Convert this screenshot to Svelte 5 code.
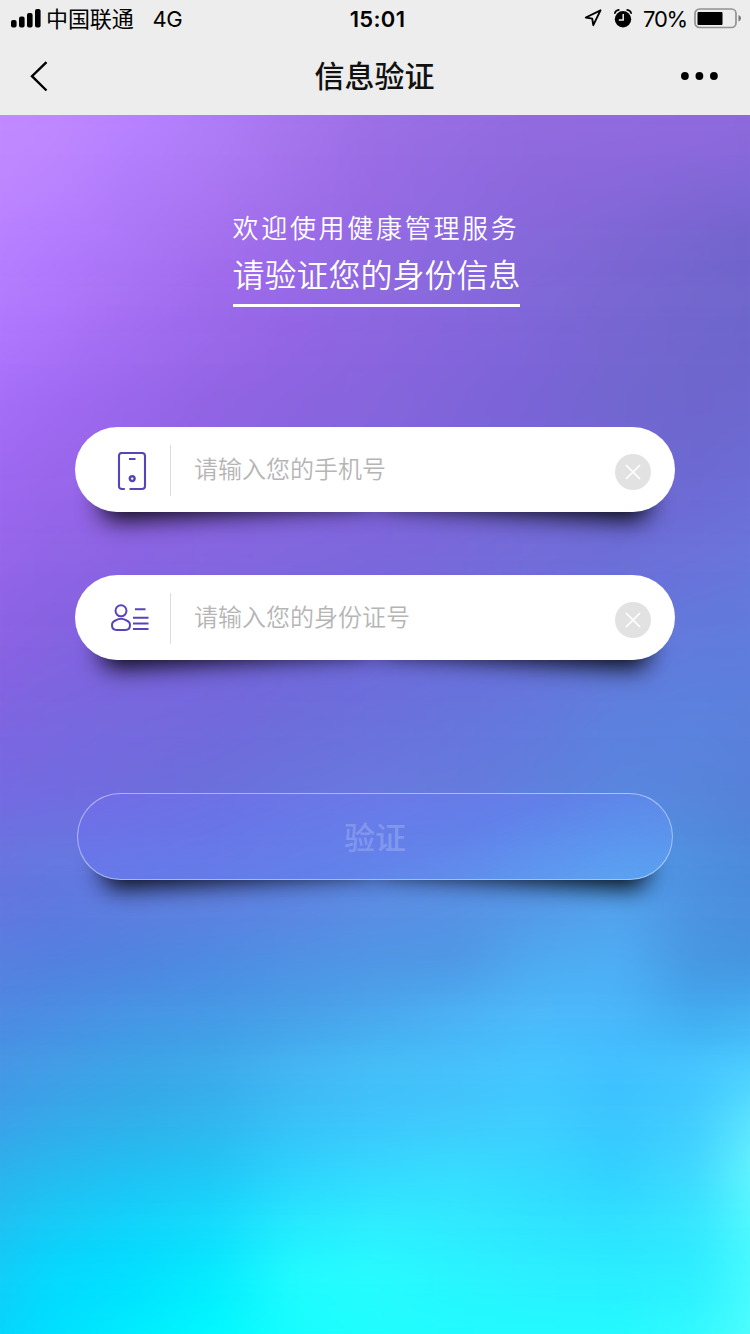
<script>
  const stops = [
    [115, 'c48bff,c088ff,bb84ff,af7bf8,a777f0,a072e8,986ee4,946ce0,926be0,906adf,9069dc'],
    [165, 'c189ff,be87ff,b580ff,ae7cf6,a474ec,9a6de4,956ce2,9069de,8f69de,8d69dd,8a68da'],
    [215, 'c088ff,b982ff,af7bfa,aa76f2,a070ea,986be5,906ae0,8b68dc,8768da,8167d6,7c67d8'],
    [265, 'b981ff,b27bff,ab76f7,a470ee,9b6be8,926ae2,8b69de,8568d9,7d66d5,7665cf,6e62c9'],
    [315, 'b47cff,ae77fc,a770f3,9d69ec,9568e7,8e68e0,8768dd,7f67d8,7966d2,7266ce,6e66cc'],
    [365, 'b077ff,a871f8,a06bf0,9968e9,9164e3,8a65df,8464dc,7d65d8,7566d1,6f66cd,6c65cb'],
    [415, 'a870f8,a06af2,9967eb,9164e4,8b64e0,8665dd,7f64da,7964d6,7266d0,6e66cd,6d68d0'],
    [500, '9e68f2,9866ea,9264e6,8c63e2,8764e0,8265dd,7c65da,7767d8,7269d6,6d6ad4,6c6fd8'],
    [560, '9866ec,9064e6,8a63e2,8565e0,8066de,7c66dc,7768da,716bd8,6c6cd7,6b71da,6876da'],
    [640, '8e62e5,8562e0,7e64df,7a66de,7568dc,716adc,6e6edc,6b71dc,6777dc,617bdc,5f7cdc'],
    [720, '8063e1,7967df,7668de,7268dc,6d6cdb,6a70dc,6674dc,6279dd,5c80dd,5a82de,5a7fdb'],
    [790, '756ae2,736be1,6f6dde,6b70dc,6a76de,6a7adf,667bde,6080de,5a86df,5885dc,5680d8'],
    [850, '6a72e0,6677e0,6478e0,6279df,607fe0,6084e1,5c87e1,5690e4,4f97e6,4f8edf,4a87d9'],
    [900, '6375e0,5d78e0,5d7ee0,5d81e0,5c85e2,5a8de3,5791e4,5598e8,54a2ee,4c93e2,4a8cdb'],
    [950, '5980e0,5480e0,5084e0,4e8be2,5092e4,5096e6,4f97e6,4eaaf0,4eaef5,4897e2,4494e0'],
    [1000, '4f86e2,4a8ce3,4794e4,4598e5,479ee8,4aa6ec,4bb0f4,4cb8fb,4ab6fa,40a9ee,44b0f4'],
    [1050, '4693e4,429ce6,3ba3e7,3ca9ea,44b4f2,44bdf7,45bffa,44c5ff,40c0ff,44c4ff,4ccfff'],
    [1100, '3f9ce8,36a8e9,32aeea,33b4ee,3abff7,3fc4fc,40c8fc,40ccff,3bc4ff,42ccff,64ebff'],
    [1150, '30aeeb,27b9f0,22c0f3,22c6f6,2ed2fe,35d8ff,38dcff,36d8ff,32d0ff,42d8ff,70ffff'],
    [1200, '22bcf0,17caf6,10d3fb,15dafd,25e8ff,2eecff,30e9ff,2fe3ff,2fdfff,35e6ff,5affff'],
    [1250, '16c8f5,02d8ff,00deff,04eaff,20fbff,26fbff,28f4ff,2aefff,28edff,2ceeff,4effff'],
    [1334, '00d4ff,00e4ff,00f4ff,00ffff,14ffff,1effff,1effff,20ffff,22ffff,34ffff,5effff']
  ];
  const row = (colors) => `linear-gradient(90deg, ${colors.split(',').map((c) => '#' + c).join(', ')})`;
  const bands = stops.slice(0, -1).map(([y, colors], i) => ({
    height: stops[i + 1][0] - y,
    top: row(colors),
    bottom: row(stops[i + 1][1])
  }));

  const fields = $state([
    { kind: 'phone', hint: '请输入您的手机号', value: '' },
    { kind: 'card', hint: '请输入您的身份证号', value: '' }
  ]);
</script>

<div class="screen">
  <header>
    <div class="status">
      <div class="carrier">
        <svg width="30" height="19" viewBox="0 0 30 19">
          <rect x="0" y="11" width="5.6" height="7.5" rx="2" />
          <rect x="8" y="7.5" width="5.6" height="11" rx="2" />
          <rect x="16" y="4" width="5.6" height="14.5" rx="2" />
          <rect x="24" y="0" width="5.6" height="18.5" rx="2" />
        </svg>
        <span>中国联通</span><span class="net">4G</span>
      </div>
      <strong>15:01</strong>
      <div class="power">
        <svg width="18" height="18" viewBox="0 0 18 18">
          <path d="M16.5 1.3 1.8 8.5 8.2 9.6 9.3 16.2Z" fill="none" stroke="#000" stroke-width="1.9" stroke-linejoin="round" />
        </svg>
        <svg class="alarm" width="18" height="19" viewBox="0 0 18 19">
          <circle cx="9" cy="10.2" r="8.2" />
          <path d="M.9 4.1Q1.7 1.3 4.8.9M17.1 4.1Q16.3 1.3 13.2.9" fill="none" stroke="#000" stroke-width="1.7" stroke-linecap="round" />
          <path d="M9.2 5V11H4.8" fill="none" stroke="#eee" stroke-width="1.5" />
        </svg>
        <span>70%</span>
        <svg class="battery" width="48" height="21" viewBox="0 0 48 21">
          <rect x="1" y="1" width="41" height="18.5" rx="4.5" fill="none" stroke="#929292" stroke-width="1.7" />
          <rect x="3.5" y="4" width="25" height="13" rx="1" />
          <path d="M44.5 7Q47 8 47 10.3T44.5 13.6Z" fill="#777" />
        </svg>
      </div>
    </div>
    <nav>
      <svg width="20" height="32" viewBox="0 0 20 32">
        <path d="M17.5 2.2 3 16.2 17.5 30.5" fill="none" stroke="#000" stroke-width="2.4" />
      </svg>
      <h1>信息验证</h1>
      <svg width="38" height="8" viewBox="0 0 38 8">
        <circle cx="4.9" cy="4" r="3.9" /><circle cx="19.4" cy="4" r="3.9" /><circle cx="33.9" cy="4" r="3.9" />
      </svg>
    </nav>
  </header>

  <main>
    <div class="backdrop">
      {#each bands as band}
        <div class="band" style:height="{band.height}px" style:background={band.bottom}>
          <div class="fade" style:background={band.top}></div>
        </div>
      {/each}
    </div>

    <section class="intro">
      <p>欢迎使用健康管理服务</p>
      <h2>请验证您的身份信息</h2>
    </section>

    <form>
      {#each fields as field}
        <div class="lifted">
          <div class="shade"></div>
          <label class="pill">
            <span class="icon">
              {#if field.kind === 'phone'}
                <svg class="phone" width="30" height="40" viewBox="0 0 30 40" fill="none" stroke="#5744bd" stroke-width="2.1">
                  <path d="M7.8 37H5Q2 37 2 34V4Q2 1 5 1H25Q28 1 28 4V34Q28 37 25 37H12.5M12 7H18.5" />
                  <circle cx="15.2" cy="26.6" r="2.4" stroke-width="2.4" />
                </svg>
              {:else}
                <svg width="40" height="30" viewBox="0 0 40 30" fill="none" stroke="#5744bd" stroke-width="2">
                  <circle cx="11" cy="7.8" r="5.5" />
                  <path d="M6 17.2Q11 14.4 16 17.2Q20 18.5 20 22Q20 26.9 15.4 26.9H6.6Q2 26.9 2 22Q2 18.5 6 17.2ZM25 6.2H35.5M23 14.8H38.5M23 20.4H38.5M23 26H38.5" />
                </svg>
              {/if}
            </span>
            <input placeholder={field.hint} bind:value={field.value} />
            <button class="clear" type="button" aria-label="清除" onclick={() => (field.value = '')}>
              <svg width="36" height="36" viewBox="0 0 36 36">
                <circle cx="18" cy="18" r="18" fill="#e2e2e2" />
                <path d="M11 11 25 25M25 11 11 25" stroke="#fff" stroke-width="1.7" />
              </svg>
            </button>
          </label>
        </div>
      {/each}
      <div class="lifted action">
        <div class="shade"></div>
        <button class="submit" type="button">验证</button>
      </div>
    </form>
  </main>
</div>

<style>
  :global(body) { margin: 0; }
  .screen {
    width: 750px;
    height: 1334px;
    overflow: hidden;
    display: flex;
    flex-direction: column;
    font-family: "Noto Sans CJK SC", sans-serif;
  }
  svg { display: block; flex: none; }
  header { height: 115px; background: #ededed; color: #000; }
  .status {
    height: 38px;
    display: grid;
    grid-template-columns: 1fr auto 1fr;
    align-items: center;
    padding: 0 9px 0 11px;
    font: 22px/38px Inter, "Noto Sans CJK SC", sans-serif;
  }
  .carrier, .power { display: flex; align-items: center; }
  .carrier svg { margin-top: -2px; }
  .carrier span { margin-left: 5px; letter-spacing: -.1px; }
  .carrier .net { margin-left: 19px; letter-spacing: -.5px; }
  .status strong { font-weight: 600; letter-spacing: .3px; padding-left: 3px; }
  .power { justify-content: flex-end; }
  .power svg { margin-top: -2px; }
  .power .alarm { margin-left: 12px; }
  .power span { margin-left: 11px; letter-spacing: -1.2px; }
  .power .battery { margin-left: 7px; margin-right: -1px; }
  nav {
    height: 77px;
    box-sizing: border-box;
    display: flex;
    align-items: center;
    justify-content: space-between;
    padding: 0 32px 1px 29px;
  }
  h1 { margin: -4px 0 0 20px; font-size: 30px; line-height: 44px; font-weight: 500; color: #111; }
  main { position: relative; flex: 1; overflow: hidden; }
  .backdrop {
    position: absolute;
    inset: 0;
    filter: blur(11px);
    transform: scale(1.07, 1.045);
  }
  .fade {
    height: 100%;
    mask-image: linear-gradient(#000, transparent);
    -webkit-mask-image: linear-gradient(#000, transparent);
  }
  .intro {
    position: relative;
    width: 287px;
    margin: 0 auto;
    padding-top: 93px;
    left: 1px;
    color: #fff;
    white-space: nowrap;
    border-bottom: 3px solid #fff;
  }
  .intro p { margin: 0; font-size: 26px; line-height: 38px; font-weight: 350; letter-spacing: 2.7px; }
  .intro h2 { margin: 4px 0 0; font-size: 32px; line-height: 46px; font-weight: 350; height: 54px; }
  form {
    position: relative;
    display: flex;
    flex-direction: column;
    align-items: center;
    gap: 63px;
    padding-top: 120px;
  }
  .lifted { position: relative; width: 600px; height: 85px; }
  .shade {
    position: absolute;
    inset: 0;
    clip-path: path(evenodd, "M-60 -60H660V160H-60ZM42.5 0H557.5A42.5 42.5 0 0 1 557.5 85H42.5A42.5 42.5 0 0 1 42.5 0Z");
  }
  .shade::before, .shade::after {
    content: "";
    position: absolute;
    bottom: 14px;
    left: 24px;
    width: 270px;
    height: 40px;
    border-radius: 24px 0 0 18px;
    box-shadow: 0 15px 24px rgba(0, 0, 0, .95);
    transform: rotate(-3.4deg);
  }
  .shade::after {
    left: auto;
    right: 24px;
    border-radius: 0 24px 18px 0;
    transform: rotate(3.4deg);
  }
  .pill {
    position: relative;
    display: flex;
    align-items: center;
    box-sizing: border-box;
    height: 100%;
    padding-right: 24px;
    background: #fff;
    border-radius: 43px;
  }
  .icon {
    width: 96px;
    height: 51px;
    box-sizing: border-box;
    padding-left: 14px;
    margin-top: 1px;
    display: flex;
    align-items: center;
    justify-content: center;
    border-right: 1px solid #ddd;
  }
  .phone { margin: 3px 0 0 5px; }
  input {
    flex: 1;
    min-width: 0;
    height: 50px;
    padding: 0 0 4px 23px;
    border: 0;
    outline: 0;
    background: none;
    font: 350 24px "Noto Sans CJK SC", sans-serif;
    color: #333;
  }
  input::placeholder { color: #b5b5b5; opacity: 1; }
  .clear { margin: 4px 0 0; padding: 0; border: 0; background: none; }
  .action { width: 596px; height: 87px; margin-top: 70px; }
  .action .shade {
    clip-path: path(evenodd, "M-60 -60H660V160H-60ZM43.5 0H552.5A43.5 43.5 0 0 1 552.5 87H43.5A43.5 43.5 0 0 1 43.5 0Z");
  }
  .submit {
    position: relative;
    width: 100%;
    height: 100%;
    padding: 0 0 2px;
    border: 1px solid rgba(255, 255, 255, .45);
    border-radius: 44px;
    background: linear-gradient(160deg, rgba(120, 110, 250, .28), rgba(105, 125, 250, .36) 60%, rgba(105, 175, 255, .45));
    color: rgba(255, 255, 255, .2);
    font: 500 31px "Noto Sans CJK SC", sans-serif;
  }
</style>
